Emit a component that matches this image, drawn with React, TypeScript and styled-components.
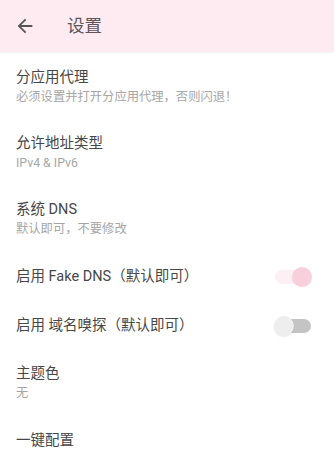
import React, { useState } from "react";
import styled, { createGlobalStyle } from "styled-components";

const Global = createGlobalStyle`
  html, body { margin: 0; padding: 0; background: #ffffff; }
  body { font-family: Roboto, "Noto Sans CJK SC", "Noto Sans", sans-serif; -webkit-font-smoothing: antialiased; }
`;

const Page = styled.div`
  width: 334px;
  min-height: 468px;
  background: #ffffff;
  display: flex;
  flex-direction: column;
`;

const Header = styled.header`
  height: 52px;
  background: #fdebf1;
  display: flex;
  align-items: center;
  padding-left: 14px;
  box-shadow: 0 1px 2px rgba(0, 0, 0, 0.06);
  box-sizing: border-box;
`;

const BackButton = styled.button`
  border: 0;
  background: transparent;
  padding: 0;
  width: 22px;
  height: 22px;
  display: flex;
  align-items: center;
  justify-content: center;
  color: #555;
  cursor: pointer;
`;

const Title = styled.h1`
  margin: 0 0 0 31px;
  font-size: 17.5px;
  font-weight: 400;
  color: #5a555b;
  line-height: 22px;
`;

const List = styled.div`
  display: flex;
  flex-direction: column;
  padding-top: 2px;
`;

const Row = styled.div<{ $compact?: boolean }>`
  display: flex;
  align-items: center;
  justify-content: space-between;
  padding: ${(p) => (p.$compact ? "14.5px" : "14px")} 23px
    ${(p) => (p.$compact ? "14.5px" : "14px")} 16px;
`;

const Texts = styled.div`
  display: flex;
  flex-direction: column;
`;

const ItemTitle = styled.div`
  font-size: 14.5px;
  line-height: 20px;
  color: #474747;
`;

const ItemSub = styled.div`
  font-size: 12.3px;
  line-height: 18px;
  color: #a6a6a6;
`;

const SwitchTrack = styled.button<{ $on: boolean }>`
  position: relative;
  width: 36px;
  height: 14px;
  border: 0;
  padding: 0;
  border-radius: 7px;
  background: ${(p) => (p.$on ? "#fdeff3" : "#c4c4c4")};
  cursor: pointer;
`;

const SwitchThumb = styled.span<{ $on: boolean }>`
  position: absolute;
  top: -3px;
  left: ${(p) => (p.$on ? "17px" : "-1px")};
  width: 20px;
  height: 20px;
  border-radius: 50%;
  background: ${(p) => (p.$on ? "#f7d0dc" : "#eeeeee")};
  box-shadow: 0 1px 2px rgba(0, 0, 0, ${(p) => (p.$on ? 0.04 : 0.1)});
`;

function Switch({ on, onToggle }: { on: boolean; onToggle: () => void }) {
  return (
    <SwitchTrack $on={on} onClick={onToggle} aria-pressed={on}>
      <SwitchThumb $on={on} />
    </SwitchTrack>
  );
}

function ArrowBack() {
  return (
    <svg width="22" height="22" viewBox="0 0 24 24" fill="currentColor">
      <path d="M20 11H7.83l5.59-5.59L12 4l-8 8 8 8 1.41-1.41L7.83 13H20v-2z" />
    </svg>
  );
}

export default function App() {
  const [fake, setFake] = useState(true);
  const [sniff, setSniff] = useState(false);
  return (
    <Page>
      <Global />
      <Header>
        <BackButton aria-label="back">
          <ArrowBack />
        </BackButton>
        <Title>设置</Title>
      </Header>
      <List>
        <Row>
          <Texts>
            <ItemTitle>分应用代理</ItemTitle>
            <ItemSub>必须设置并打开分应用代理，否则闪退！</ItemSub>
          </Texts>
        </Row>
        <Row>
          <Texts>
            <ItemTitle>允许地址类型</ItemTitle>
            <ItemSub>IPv4 &amp; IPv6</ItemSub>
          </Texts>
        </Row>
        <Row>
          <Texts>
            <ItemTitle>系统 DNS</ItemTitle>
            <ItemSub>默认即可，不要修改</ItemSub>
          </Texts>
        </Row>
        <Row $compact>
          <ItemTitle>启用 Fake DNS（默认即可）</ItemTitle>
          <Switch on={fake} onToggle={() => setFake(!fake)} />
        </Row>
        <Row $compact>
          <ItemTitle>启用 域名嗅探（默认即可）</ItemTitle>
          <Switch on={sniff} onToggle={() => setSniff(!sniff)} />
        </Row>
        <Row>
          <Texts>
            <ItemTitle>主题色</ItemTitle>
            <ItemSub>无</ItemSub>
          </Texts>
        </Row>
        <Row $compact>
          <ItemTitle>一键配置</ItemTitle>
        </Row>
      </List>
    </Page>
  );
}
